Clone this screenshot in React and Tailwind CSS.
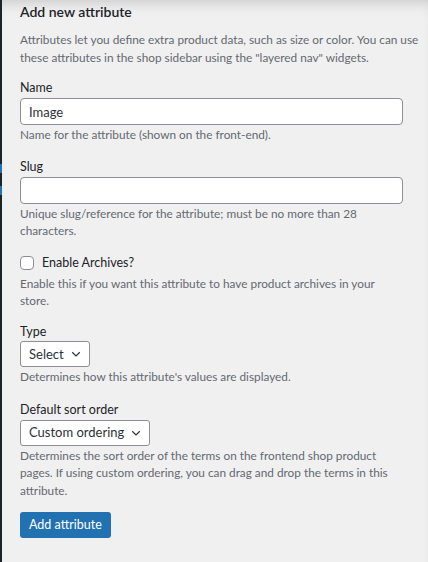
import React, { useState } from "react";

const font = { fontFamily: "Lato, 'Noto Sans', sans-serif" };

const Help = ({ children }) => (
  <p className="text-[11.8px] leading-[17.5px] text-[#646970] whitespace-nowrap">{children}</p>
);

const Chevron = () => (
  <svg width="10" height="10" viewBox="0 0 10 10" fill="none" className="shrink-0">
    <path d="M1.2 3.3 L5 7 L8.8 3.3" stroke="#2c3338" strokeWidth="1.2" />
  </svg>
);

const SelectBox = ({ value }) => (
  <div className="inline-flex items-center gap-[7px] h-[26px] pl-[8px] pr-[8px] bg-white border border-[#8c8f94] rounded-[3px] text-[13px] text-[#2c3338]">
    <span>{value}</span>
    <Chevron />
  </div>
);

export default function App() {
  const [name, setName] = useState("Image");
  const [slug, setSlug] = useState("");
  const [archives, setArchives] = useState(false);

  return (
    <div
      className="w-[428px] h-[562px] overflow-hidden flex bg-[#f0f0f1] shadow-[inset_0_10px_14px_-8px_rgba(0,0,0,0.18)]"
      style={font}
    >
      <div className="w-[2px] flex flex-col shrink-0">
        <div className="h-[164px] bg-[#1d2327]" />
        <div className="h-[9px] bg-[#2271b1]" />
        <div className="h-[13px] bg-[#1d2327]" />
        <div className="h-[9px] bg-[#2271b1]" />
        <div className="flex-1 bg-[#1d2327]" />
      </div>

      <div className="flex-1 min-w-0 pl-[18px] pr-[4px] pt-[2px] flex flex-col">
        <h2 className="text-[14px] font-semibold text-[#1d2327] leading-[20px]">
          Add new attribute
        </h2>
        <div className="mt-[9px]">
          <Help>
            Attributes let you define extra product data, such as size or color. You can use
            <br />
            these attributes in the shop sidebar using the "layered nav" widgets.
          </Help>
        </div>

        <label className="mt-[13px] text-[12.5px] leading-[18px] text-[#1d2327]">Name</label>
        <input
          value={name}
          onChange={(e) => setName(e.target.value)}
          className="mt-[1px] w-[383px] h-[27px] px-[8px] bg-white border border-[#8c8f94] rounded-[4px] text-[13px] text-[#2c3338] outline-none"
        />
        <div className="mt-[1px]">
          <Help>Name for the attribute (shown on the front-end).</Help>
        </div>

        <label className="mt-[14px] text-[12.5px] leading-[18px] text-[#1d2327]">Slug</label>
        <input
          value={slug}
          onChange={(e) => setSlug(e.target.value)}
          className="mt-[1px] w-[383px] h-[27px] px-[8px] bg-white border border-[#8c8f94] rounded-[4px] text-[13px] text-[#2c3338] outline-none"
        />
        <div className="mt-[1px]">
          <Help>
            Unique slug/reference for the attribute; must be no more than 28
            <br />
            characters.
          </Help>
        </div>

        <label className="mt-[14px] flex items-center gap-[8px] text-[12.5px] leading-[18px] text-[#1d2327] cursor-pointer">
          <input
            type="checkbox"
            checked={archives}
            onChange={(e) => setArchives(e.target.checked)}
            className="appearance-none w-[14px] h-[14px] bg-white border border-[#8c8f94] rounded-[4px] checked:bg-[#2271b1]"
          />
          <span>Enable Archives?</span>
        </label>
        <div className="mt-[3px]">
          <Help>
            Enable this if you want this attribute to have product archives in your
            <br />
            store.
          </Help>
        </div>

        <label className="mt-[13px] text-[12.5px] leading-[18px] text-[#1d2327]">Type</label>
        <div>
          <SelectBox value="Select" />
        </div>
        <div className="mt-[1px]">
          <Help>Determines how this attribute's values are displayed.</Help>
        </div>

        <label className="mt-[15px] text-[12.5px] leading-[18px] text-[#1d2327]">
          Default sort order
        </label>
        <div>
          <SelectBox value="Custom ordering" />
        </div>
        <div className="mt-[1px]">
          <Help>
            Determines the sort order of the terms on the frontend shop product
            <br />
            pages. If using custom ordering, you can drag and drop the terms in this
            <br />
            attribute.
          </Help>
        </div>

        <div className="mt-[12px]">
          <button className="h-[26px] px-[9px] bg-[#2271b1] text-white text-[12.5px] rounded-[3px]">
            Add attribute
          </button>
        </div>
      </div>
    </div>
  );
}
